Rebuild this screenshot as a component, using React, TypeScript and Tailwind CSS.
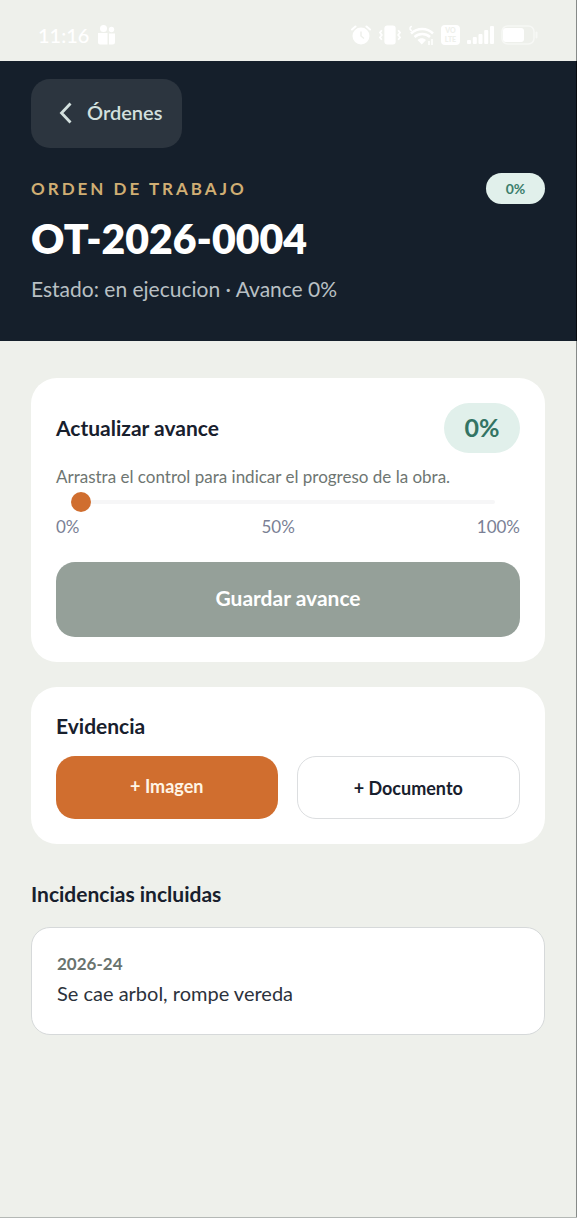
import { useState } from 'react'
import type { ReactNode } from 'react'

function StatusBar() {
  return (
    <div className="flex h-[61px] items-center justify-between border-r border-r-[#868a88] pl-[38px] pr-[37px] pt-[9px] text-white">
      <div className="flex items-center gap-2">
        <span className="text-[20px] font-medium leading-6">11:16</span>
        <svg width="19" height="20" viewBox="0 0 19 20" fill="currentColor">
          <circle cx="6.5" cy="3.5" r="3.5" />
          <circle cx="14.5" cy="4.5" r="2.7" />
          <path d="M1 8h9.5v11.5H3a2 2 0 0 1-2-2zM12 8.5h6V17a2.5 2.5 0 0 1-2.5 2.5H12z" />
        </svg>
      </div>
      <div className="flex items-center gap-[7px]">
        <svg width="20" height="20" viewBox="0 0 20 20" fill="none">
          <circle cx="10" cy="11" r="8.5" fill="currentColor" />
          <path d="M1 4.5 4.5 1.5M19 4.5l-3.500-3" stroke="currentColor" strokeWidth="2" strokeLinecap="round" />
          <path d="M10 6.5V11l3 2.5" stroke="#eef0eb" strokeWidth="1.5" />
        </svg>
        <svg width="24" height="20" viewBox="0 0 25 20" fill="none" stroke="currentColor" strokeWidth="1.8">
          <rect x="7.5" y="1" width="10" height="18" rx="2" fill="currentColor" />
          <path d="m4 5-2 2.500L4 10l-2 2.500L4 15M21 5l2 2.500-2 2.500 2 2.500-2 2.500" />
        </svg>
        <svg width="25" height="20" viewBox="0 0 25 20" fill="none" stroke="currentColor" strokeWidth="2.5">
          <path d="M2 8.500C8.500 2.500 18 2.500 24 8.500M5.500 12C10 8 16.500 8 21 12" />
          <path d="M8.500 15c2.500-2.200 6-2.200 8.500 0l-4.200 4.500z" fill="currentColor" stroke="none" />
          <path d="M3 5.500a2 2 0 1 1 0-4M20 16v4M23 14v6" strokeWidth="1.5" />
        </svg>
        <span className="flex h-5 w-[19px] flex-col items-center justify-center rounded-sm bg-white text-[7px] font-black leading-[9px] text-[#eef0eb]">
          <span>VO</span>
          <span>LTE</span>
        </span>
        <svg width="27" height="18" viewBox="0 0 27 18" fill="currentColor">
          <rect x="0" y="14" width="4" height="4" rx="1" />
          <rect x="5.8" y="11" width="4" height="7" rx="1" />
          <rect x="11.5" y="8" width="4" height="10" rx="1" />
          <rect x="17.2" y="4" width="4" height="14" rx="1" />
          <rect x="23" y="0" width="4" height="18" rx="1" />
        </svg>
        <svg width="38" height="20" viewBox="0 0 38 20" fill="none">
          <rect x="1" y="1" width="32" height="18" rx="5.5" stroke="currentColor" strokeOpacity="0.5" strokeWidth="1.5" />
          <rect x="2" y="3" width="21" height="14" rx="3" fill="currentColor" />
          <path d="M35.500 7.500v5" stroke="currentColor" strokeOpacity="0.5" strokeWidth="2" strokeLinecap="round" />
        </svg>
      </div>
    </div>
  )
}

function Header({ progress }: { progress: number }) {
  return (
    <header className="border-r border-r-[#05090f] bg-[#151f2b] px-[31px] pb-[38px] pt-[18px]">
      <button
        type="button"
        className="flex h-[69px] items-center gap-3 rounded-[19px] bg-[#2c353f] pb-[3px] pl-[27px] pr-[20px] text-[20px] font-semibold leading-6 text-[#d3e0de]"
      >
        <svg width="17" height="24" viewBox="0 0 17 24" fill="none" stroke="currentColor" strokeWidth="2.8">
          <path d="M12.500 3.500 3.500 13l9 9.500" />
        </svg>
        Órdenes
      </button>
      <div className="mt-[25px] flex items-center justify-between">
        <p className="text-[17px] font-bold leading-6 tracking-[3px] text-[#d0ae73]">ORDEN DE TRABAJO</p>
        <span className="flex h-[31px] w-[59px] items-center justify-center rounded-full bg-[#e1f0eb] text-[14px] font-bold text-[#3c7e6b]">
          {progress}%
        </span>
      </div>
      <h1 className="mt-[10px] text-[41px] font-extrabold leading-[50px] text-white">OT-2026-0004</h1>
      <p className="mt-[11px] text-[21px] leading-7 text-[#b9c0c4]">Estado: en ejecucion · Avance {progress}%</p>
    </header>
  )
}

function Card({ children }: { children: ReactNode }) {
  return <section className="rounded-[26px] bg-white p-[25px]">{children}</section>
}

export default function App() {
  const [progress, setProgress] = useState(0)

  return (
    <div className="flex min-h-screen flex-col border-b border-b-[#b4b8b5] bg-[#eef0eb] font-['Lato',sans-serif] text-[#18202d]">
      <StatusBar />
      <Header progress={progress} />
      <main className="flex-1 border-r border-r-[#868a88] px-[31px] pb-8 pt-[37px]">
        <div className="space-y-[25px]">
          <Card>
            <div className="flex items-center justify-between">
              <h2 className="text-[21px] font-bold leading-6">
                <label htmlFor="avance">Actualizar avance</label>
              </h2>
              <output
                htmlFor="avance"
                className="flex h-[50px] min-w-[76px] items-center justify-center rounded-full bg-[#e1f0eb] px-4 text-[25px] font-bold text-[#337463]"
              >
                {progress}%
              </output>
            </div>
            <p className="mt-3 text-[17px] leading-6 text-[#6e7672]">
              Arrastra el control para indicar el progreso de la obra.
            </p>
            <input
              id="avance"
              type="range"
              min={0}
              max={100}
              value={progress}
              onChange={(e) => setProgress(Number(e.target.value))}
              className="ml-[15px] mt-[3px] block h-5 w-[calc(100%-40px)] appearance-none bg-transparent [&::-webkit-slider-runnable-track]:h-1 [&::-webkit-slider-runnable-track]:rounded-full [&::-webkit-slider-runnable-track]:bg-[#f6f6f7] [&::-webkit-slider-thumb]:-mt-2 [&::-webkit-slider-thumb]:h-5 [&::-webkit-slider-thumb]:w-5 [&::-webkit-slider-thumb]:appearance-none [&::-webkit-slider-thumb]:rounded-full [&::-webkit-slider-thumb]:bg-[#d06e2f]"
            />
            <div className="mt-[3px] flex justify-between text-[17px] leading-6 text-[#7a7f95]">
              <span>0%</span>
              <span>50%</span>
              <span>100%</span>
            </div>
            <button
              type="button"
              className="mt-[23px] h-[75px] w-full rounded-[19px] bg-[#95a099] pb-[3px] text-[21px] font-bold leading-6 text-white"
            >
              Guardar avance
            </button>
          </Card>
          <Card>
            <h2 className="text-[21px] font-bold leading-7">Evidencia</h2>
            <div className="mt-4 flex gap-[19px]">
              <button
                type="button"
                className="h-[63px] flex-1 rounded-[19px] bg-[#d06e2f] pb-[3px] text-[18px] font-bold leading-6 text-[#fff5e6]"
              >
                + Imagen
              </button>
              <button
                type="button"
                className="h-[63px] flex-1 rounded-[19px] border border-[#dcdee0] bg-white text-[18px] font-bold leading-6"
              >
                + Documento
              </button>
            </div>
          </Card>
        </div>
        <h2 className="mt-9 text-[21px] font-bold leading-7">Incidencias incluidas</h2>
        <article className="mt-[19px] rounded-[19px] border border-[#d6d9da] bg-white px-[25px] pb-[27px] pt-6">
          <p className="text-[17px] font-bold leading-6 text-[#69736e]">2026-24</p>
          <p className="mt-[3px] text-[20px] leading-7 text-[#2c323c]">Se cae arbol, rompe vereda</p>
        </article>
      </main>
    </div>
  )
}
